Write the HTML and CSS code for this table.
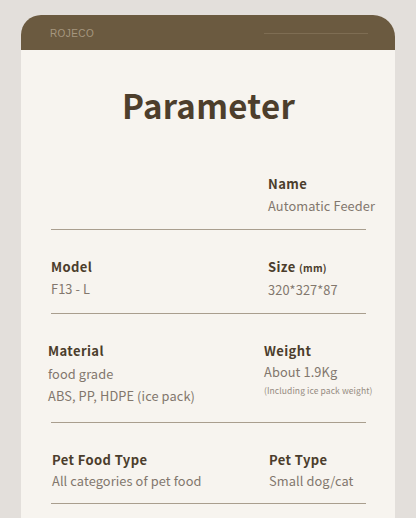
FILE: index.html
```html
<!DOCTYPE html>
<html>
<head>
<meta charset="utf-8">
<link rel="stylesheet" href="styles.css">
</head>
<body>
<div class="card">
  <div class="card-head">
    <span class="brand">ROJECO</span>
    <span class="head-line"></span>
  </div>
  <div class="card-body">
    <h1 class="title">Parameter</h1>
    <div class="row row-first">
      <div class="cell"></div>
      <div class="cell">
        <div class="label">Name</div>
        <div class="value">Automatic Feeder</div>
      </div>
    </div>
    <div class="row">
      <div class="cell">
        <div class="label">Model</div>
        <div class="value">F13 - L</div>
      </div>
      <div class="cell">
        <div class="label">Size <span class="unit">(mm)</span></div>
        <div class="value">320*327*87</div>
      </div>
    </div>
    <div class="row row-material">
      <div class="cell cell-shift-left">
        <div class="label">Material</div>
        <div class="value value-tall">food grade</div>
        <div class="value value-tall value-tight">ABS, PP, HDPE (ice pack)</div>
      </div>
      <div class="cell cell-shift-right">
        <div class="label">Weight</div>
        <div class="value value-tight-top">About 1.9Kg</div>
        <div class="note">(Including ice pack weight)</div>
      </div>
    </div>
    <div class="row row-last">
      <div class="cell cell-nudge">
        <div class="label">Pet Food Type</div>
        <div class="value value-tight-top">All categories of pet food</div>
      </div>
      <div class="cell cell-nudge">
        <div class="label">Pet Type</div>
        <div class="value value-tight-top">Small dog/cat</div>
      </div>
    </div>
  </div>
</div>
</body>
</html>
```

FILE: styles.css
```css
html, body {
  margin: 0;
  padding: 0;
}
body {
  background: #e3dfdb;
  width: 416px;
  height: 518px;
  overflow: hidden;
  font-family: "Noto Sans CJK SC", "Noto Sans", sans-serif;
}
.card {
  margin: 15px 0 0 21px;
  width: 374px;
  height: 503px;
  background: #f7f4ef;
  border-radius: 20px 22px 0 0;
  overflow: hidden;
}
.card-head {
  height: 35px;
  background: #6b5a40;
  display: flex;
  align-items: center;
  padding: 0 0 0 29px;
  box-sizing: border-box;
}
.brand {
  font-family: "Liberation Sans", Arial, sans-serif;
  font-size: 10px;
  letter-spacing: 0.4px;
  color: #a6977f;
  margin-top: 1px;
}
.head-line {
  margin-left: auto;
  margin-right: 27px;
  width: 104px;
  height: 1px;
  background: #7e6d53;
  margin-top: 1px;
}
.card-body {
  padding: 0 29px 0 30px;
}
.title {
  margin: 0;
  padding-top: 33px;
  height: 79px;
  box-sizing: border-box;
  text-align: center;
  font-size: 33px;
  line-height: 44px;
  font-weight: 700;
  letter-spacing: 0.3px;
  color: #4d3e2c;
}
.row {
  display: grid;
  grid-template-columns: 217px 98px;
  padding: 27px 0 13px;
  border-bottom: 1.5px solid #a99e8e;
}
.cell {
  white-space: nowrap;
}
.row-first {
  padding-top: 0;
  margin-top: 45px;
}
.row-material {
  padding-bottom: 15px;
}
.row-last {
  padding-bottom: 12px;
}
.cell-shift-left {
  margin-left: -3px;
}
.cell-shift-right {
  margin-left: -4px;
}
.cell-nudge {
  margin-left: 1px;
}
.label {
  font-size: 13px;
  line-height: 20px;
  font-weight: 700;
  letter-spacing: 0.4px;
  color: #4b3d2c;
}
.unit {
  font-size: 10px;
  letter-spacing: 0.2px;
}
.value {
  margin-top: 1px;
  font-size: 12.8px;
  line-height: 21px;
  letter-spacing: 0.1px;
  color: #82776d;
}
.value-tall {
  margin-top: 2px;
  line-height: 22px;
}
.value-tight {
  margin-top: 0;
}
.value-tight-top {
  margin-top: 0;
}
.note {
  font-size: 8.5px;
  line-height: 14px;
  margin-top: 1px;
  color: #958b81;
  letter-spacing: 0.1px;
}
```
